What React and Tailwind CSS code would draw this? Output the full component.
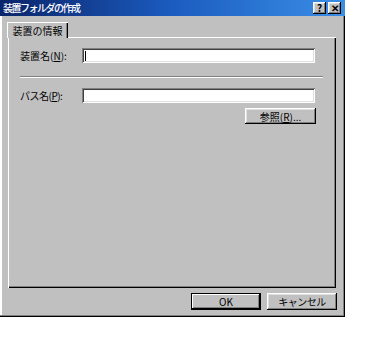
import React from "react";

const raised =
  "shadow-[inset_-1px_-1px_#000,inset_1px_1px_#fff,inset_-2px_-2px_#808080,inset_2px_2px_#dfdfdf]";
const sunken =
  "shadow-[inset_1px_1px_#808080,inset_-1px_-1px_#fff,inset_2px_2px_#404040,inset_-2px_-2px_#dfdfdf]";

function Btn({ children, className = "", isDefault = false }) {
  return (
    <div
      className={`flex items-center justify-center bg-[#c0c0c0] text-black text-[10px] ${
        isDefault
          ? "shadow-[inset_0_0_0_1px_#000,inset_-2px_-2px_#000,inset_2px_2px_#fff,inset_-3px_-3px_#808080]"
          : raised
      } ${className}`}
    >
      {children}
    </div>
  );
}

function TitleBtn({ children }) {
  return (
    <div
      className={`w-[13px] h-[12px] bg-[#c0c0c0] flex items-center justify-center text-[10px] font-bold leading-none text-black ${raised}`}
    >
      {children}
    </div>
  );
}

export default function App() {
  return (
    <div
      className="w-[378px] h-[340px] bg-white"
      style={{ fontFamily: '"Noto Sans CJK JP", "Liberation Sans", sans-serif' }}
    >
      <div className="w-[345px] h-[317px] bg-[#c0c0c0] flex flex-col shadow-[inset_-1px_-1px_#000,inset_-2px_-2px_#808080,inset_2px_0_#fff]">
        {/* title bar */}
        <div className="h-[16px] flex items-center justify-between pl-[3px] pr-[4px] bg-gradient-to-r from-[#0a246a] via-[#1c5cc0] to-[#3a8ee6]">
          <span className="text-white text-[10px] font-medium leading-none tracking-[-1.5px]">
            装置フォルダの作成
          </span>
          <div className="flex gap-[2px]">
            <TitleBtn>?</TitleBtn>
            <TitleBtn>✕</TitleBtn>
          </div>
        </div>

        <div className="pl-[8px] pt-[6px]">
          {/* tab */}
          <div className="h-[15px] flex">
            <div className="ml-[-1px] w-[61px] h-[16px] flex items-center justify-center text-[10px] text-black bg-[#c0c0c0] relative z-10 shadow-[inset_1px_1px_#fff,inset_-1px_0_#000,inset_-2px_0_#808080]">
              装置の情報
            </div>
          </div>

          {/* panel */}
          <div className="w-[328px] h-[251px] pt-[11px] pl-[12px] shadow-[inset_1px_1px_#fff,inset_-1px_-1px_#000,inset_-2px_-2px_#808080]">
            <div className="flex items-center h-[15px]">
              <span className="w-[62px] text-[10px] text-black leading-none">
                装置名(<span className="underline">N</span>):
              </span>
              <div className={`w-[233px] h-[15px] bg-white flex items-center pl-[3px] ${sunken}`}>
                <div className="w-[1px] h-[10px] bg-black" />
              </div>
            </div>

            <div className="mt-[13px] w-[303px] h-[2px] border-t border-[#808080] border-b border-b-white" />

            <div className="mt-[10px] flex items-center h-[15px]">
              <span className="w-[62px] text-[10px] text-black leading-none tracking-[-0.5px]">
                パス名(<span className="underline">P</span>):
              </span>
              <div className={`w-[233px] h-[15px] bg-white ${sunken}`} />
            </div>

            <div className="mt-[5px] flex pl-[225px]">
              <Btn className="w-[71px] h-[16px]">
                参照(<span className="underline">R</span>)...
              </Btn>
            </div>
          </div>

          {/* footer buttons */}
          <div className="mt-[5px] flex gap-[6px] pl-[183px]">
            <Btn className="w-[70px] h-[17px]" isDefault>
              OK
            </Btn>
            <Btn className="w-[70px] h-[17px] tracking-[-0.5px]">キャンセル</Btn>
          </div>
        </div>
      </div>
    </div>
  );
}
